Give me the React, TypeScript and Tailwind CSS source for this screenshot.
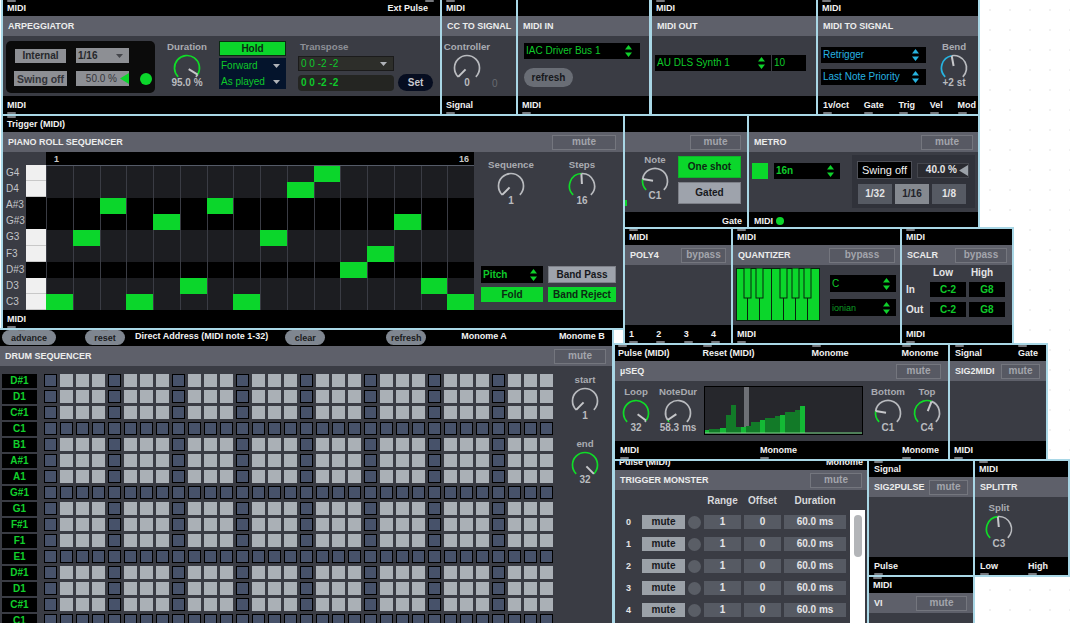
import React from "react";

const GREEN = "#0bd62b";

function Nub({ side, right }: { side: "top" | "bottom"; right?: boolean }) {
  return (
    <i
      className={
        "absolute h-[2px] w-[9px] rounded-[1px] bg-[#77797e] " +
        (side === "top" ? "top-0 " : "bottom-0 ") +
        (right ? "right-[-6px]" : "left-0")
      }
    />
  );
}

function Port({ label, side, right, className }: { label: string; side: "top" | "bottom"; right?: boolean; className?: string }) {
  return (
    <span className={"relative flex items-center " + (className ?? "")}>
      <Nub side={side} right={right} />
      {label}
    </span>
  );
}

function Bar({ h, className, children }: { h: string; className?: string; children?: React.ReactNode }) {
  return <div className={"flex shrink-0 items-stretch justify-between bg-black text-[9px] text-[#f2f2f2] " + h + " " + (className ?? "px-[4px]")}>{children}</div>;
}

function Ghost({ label, className }: { label: string; className: string }) {
  return (
    <div className={"flex items-center justify-center border border-[#74767e] bg-[#575963] text-[#a3a5ac] " + className}>{label}</div>
  );
}

function Module({
  pos,
  title,
  action,
  top,
  bottom,
  topClass,
  bottomClass,
  bodyClass,
  footH = "h-[18px]",
  children,
}: {
  pos: string;
  title: string;
  action?: React.ReactNode;
  top?: React.ReactNode;
  bottom?: React.ReactNode;
  topClass?: string;
  bottomClass?: string;
  bodyClass?: string;
  footH?: string;
  children?: React.ReactNode;
}) {
  return (
    <section className={"absolute flex flex-col overflow-hidden border-2 border-[#a9d7e6] " + pos}>
      <Bar h="h-[16px]" className={topClass}>{top}</Bar>
      <div className="flex h-[20px] shrink-0 items-center justify-between bg-[#5e606a] px-[5px] text-[#eceded]">
        <span className="text-[9px]">{title}</span>
        {action}
      </div>
      <div className={"min-h-0 flex-1 bg-[#3a3c44] " + (bodyClass ?? "")}>{children}</div>
      <Bar h={footH} className={bottomClass}>{bottom}</Bar>
    </section>
  );
}

function Dial({
  label,
  value,
  amount,
  className,
  color = "#10dc28",
}: {
  label: string;
  value: string;
  amount: number;
  className: string;
  color?: string;
}) {
  const r = 12.5;
  const point = (a: number, radius: number) => {
    const t = ((-225 + a * 270) * Math.PI) / 180;
    return [15 + radius * Math.cos(t), 15 + radius * Math.sin(t)];
  };
  const arc = (from: number, to: number) => {
    const [x1, y1] = point(from, r);
    const [x2, y2] = point(to, r);
    const large = (to - from) * 270 > 180 ? 1 : 0;
    return `M${x1} ${y1}A${r} ${r} 0 ${large} 1 ${x2} ${y2}`;
  };
  const [nx, ny] = point(amount, r);
  const [bx, by] = point(amount, 2);
  return (
    <div className={"flex flex-col items-center " + className}>
      <span className="h-[12px] text-[9.7px] leading-[12px] text-[#a9abb1]">{label}</span>
      <svg width="30" height="30" viewBox="0 0 30 30" className="shrink-0">
        {amount < 1 && <path d={arc(amount, 1)} fill="none" stroke="#b9bbbf" strokeWidth="1.7" />}
        {amount > 0 && <path d={arc(0, amount)} fill="none" stroke={color} strokeWidth="1.7" />}
        <path d={`M${bx} ${by}L${nx} ${ny}`} stroke="#c6c7ca" strokeWidth="2" />
      </svg>
      <span className="mt-[-6px] h-[12px] leading-[12px] text-[#b9bbbf]">{value}</span>
    </div>
  );
}

function UpDown({ color = "#0fd02b" }: { color?: string }) {
  return (
    <svg width="7" height="12" viewBox="0 0 7 12" className="shrink-0">
      <path d="M3.5 0L7 4.5H0Z M0 7.5H7L3.5 12Z" fill={color} />
    </svg>
  );
}

function Down({ color = "#b0b3b8" }: { color?: string }) {
  return (
    <svg width="7" height="4" viewBox="0 0 7 4" className="shrink-0">
      <path d="M0 0H7L3.5 4Z" fill={color} />
    </svg>
  );
}

function Drop({ label, className, arrow, textClass }: { label: string; className: string; arrow: React.ReactNode; textClass?: string }) {
  return (
    <div className={"flex items-center justify-between pl-[2px] pr-[6px] font-normal " + className}>
      <span className={textClass ?? "text-[#0fc92a]"}>{label}</span>
      {arrow}
    </div>
  );
}

function Btn({ label, className }: { label: string; className: string }) {
  return <div className={"flex items-center justify-center " + className}>{label}</div>;
}

function Pill({ label, className }: { label: string; className: string }) {
  return (
    <div className={"relative flex h-[15px] items-center justify-center rounded-full bg-[#7f8690] text-[#1b1c20] " + className}>
      <i className="absolute left-[16px] top-[-1px] h-[2px] w-[7px] bg-[#77797e]" />
      {label}
    </div>
  );
}

function Arpeggiator() {
  return (
    <Module
      pos="left-[1px] top-[-2px] h-[118px] w-[441px]"
      title="ARPEGGIATOR"
      topClass="pl-[4px] pr-[12px]"
      top={<><Port label="MIDI" side="top" /><Port label="Ext Pulse" side="top" right /></>}
      bottom={<Port label="MIDI" side="bottom" />}
      bodyClass="flex items-start"
    >
      <div className="ml-[3px] mt-[5px] flex h-[52px] w-[149px] shrink-0 flex-col gap-[8px] rounded-[5px] bg-[#0b0b0b] pl-[8px] pt-[7px]">
        <div className="flex items-center gap-[10px]">
          <Btn label="Internal" className="ml-[1px] h-[14px] w-[51px] bg-[#8d8f94] text-[#26272b]" />
          <Drop label="1/16" className="h-[15px] w-[53px] bg-[#8d8f94] text-[#26272b]" textClass="font-bold text-[#26272b]" arrow={<Down color="#44464b" />} />
        </div>
        <div className="flex items-center gap-[9px]">
          <Btn label="Swing off" className="h-[15px] w-[53px] bg-[#8d8f94] text-[10.5px] text-[#33343a]" />
          <div className="flex h-[15px] w-[53px] items-center justify-end bg-[#8d8f94] text-[#33343a]">
            <span className="mr-[3px] font-normal">50.0 %</span>
            <svg width="9" height="11" viewBox="0 0 9 11"><path d="M0 5.5L9 0V11Z" fill={GREEN} /></svg>
          </div>
          <i className="ml-[2px] h-[12px] w-[12px] rounded-full bg-[#0bd62b]" />
        </div>
      </div>
      <Dial label="Duration" value="95.0 %" amount={0.95} className="ml-[7px] mt-[5px] w-[50px]" />
      <div className="ml-[7px] mt-[5px] flex w-[67px] flex-col">
        <Btn label="Hold" className="h-[15px] border border-[#0a2a12] bg-[#0bd62b] text-[#0b2a12]" />
        <Drop label="Forward" className="mt-[2px] h-[16px] bg-[#04142c]" arrow={<Down />} />
        <Drop label="As played" className="h-[15px] bg-[#04142c]" arrow={<Down />} />
      </div>
      <div className="ml-[12px] mt-[5px] flex w-[136px] flex-col">
        <span className="h-[12px] pl-[2px] text-[9.7px] leading-[12px] text-[#8d8f96]">Transpose</span>
        <Drop label="0 0 -2 -2" className="mt-[3px] h-[15px] w-[96px] border border-[#1b1b1b] bg-[#2d2e2a]" arrow={<Down />} />
        <div className="mt-[3px] flex items-center gap-[4px]">
          <div className="flex h-[16px] w-[96px] items-center rounded-[4px] bg-[#242522] pl-[3px] text-[#0fc92a]">0 0 -2 -2</div>
          <Btn label="Set" className="h-[17px] w-[35px] rounded-full bg-[#060d20] text-[#c6c8cf]" />
        </div>
      </div>
    </Module>
  );
}

const ROWS = [
  { name: "G4", white: true },
  { name: "D4", white: true },
  { name: "A#3", white: false },
  { name: "G#3", white: false },
  { name: "G3", white: true },
  { name: "F3", white: true },
  { name: "D#3", white: false },
  { name: "D3", white: true },
  { name: "C3", white: true },
];
const SEQ = [8, 4, 2, 8, 3, 7, 2, 8, 4, 1, 0, 6, 5, 3, 7, 8];

function PianoRoll() {
  return (
    <Module
      pos="left-[1px] top-[114px] h-[216px] w-[624px]"
      title="PIANO ROLL SEQUENCER"
      action={<Ghost label="mute" className="mr-[2px] h-[15px] w-[64px]" />}
      top={<Port label="Trigger (MIDI)" side="top" />}
      bottom={<Port label="MIDI" side="bottom" />}
      bodyClass="flex"
    >
      <div className="w-[43px] shrink-0 pt-[13px]">
        <div className="grid h-[145px] grid-rows-[repeat(9,1fr)]">
          {ROWS.map((row) => (
            <div key={row.name} className="flex">
              <span className="flex w-[23px] items-center pl-[3px] font-normal text-[#c3c4c8]">{row.name}</span>
              <i className={"w-[20px] border-b border-[#c8c8c8] " + (row.white ? "bg-[#f0f0f0]" : "border-black bg-black")} />
            </div>
          ))}
        </div>
      </div>
      <div className="w-[428px] shrink-0">
        <div className="flex h-[13px] items-center justify-between bg-black pl-[8px] pr-[5px] text-[9px] text-[#c9c9c9]">
          <span>1</span>
          <span>16</span>
        </div>
        <div className="grid h-[145px] grid-cols-[repeat(16,1fr)] grid-rows-[repeat(9,1fr)] border-t border-[#555b68]">
          {ROWS.map((row, r) =>
            SEQ.map((note, c) => (
              <i
                key={`${r}-${c}`}
                className={
                  note === r
                    ? "bg-[#0bd62b]"
                    : "border-l border-[#3a3c44] " + (row.white ? "bg-[#1c1d21]" : "bg-black")
                }
              />
            ))
          )}
        </div>
      </div>
      <div className="flex min-w-0 flex-1 flex-col pl-[2px] pt-[7px]">
        <div className="flex">
          <Dial label="Sequence" value="1" amount={0} className="w-[70px]" />
          <Dial label="Steps" value="16" amount={0.49} className="ml-[1px] w-[70px]" />
        </div>
        <div className="mb-[8px] ml-[5px] mt-auto grid grid-cols-[62px_68px] gap-x-[5px] gap-y-[4px]">
          <Drop label="Pitch" className="h-[17px] bg-black pl-[2px]" textClass="font-bold text-[#0fc92a]" arrow={<UpDown />} />
          <Btn label="Band Pass" className="h-[17px] border border-[#7d8088] bg-[#9ea3ac] text-[#17181c]" />
          <Btn label="Fold" className="h-[15px] bg-[#0bd62b] text-[#0c2a13]" />
          <Btn label="Band Reject" className="h-[15px] bg-[#0bd62b] text-[#0c2a13]" />
        </div>
      </div>
    </Module>
  );
}

function Gate() {
  return (
    <Module
      pos="left-[623px] top-[114px] h-[118px] w-[126px]"
      title=""
      action={<Ghost label="mute" className="mr-[1px] h-[15px] w-[51px]" />}
      topClass="px-[4px]"
      bottomClass="justify-end pr-[5px] pl-0"
      bottom={<Port label="Gate" side="bottom" />}
      bodyClass="flex"
    >
      <i className="mt-[48px] h-[6px] w-[2px] bg-[#0bd62b]" />
      <Dial label="Note" value="C1" amount={0.2} className="ml-[5px] mt-[2px] w-[46px]" />
      <div className="mt-[4px] flex w-[63px] flex-col gap-[4px]">
        <Btn label="One shot" className="h-[22px] border border-[#0fb52b] bg-[#0bd62b] text-[#0c2a13]" />
        <Btn label="Gated" className="h-[22px] border border-[#7d8088] bg-[#9ea3ac] text-[#17181c]" />
      </div>
    </Module>
  );
}

function Metro() {
  return (
    <Module
      pos="left-[747px] top-[114px] h-[118px] w-[233px]"
      title="METRO"
      action={<Ghost label="mute" className="h-[15px] w-[52px]" />}
      bottom={
        <span className="relative flex items-center gap-[3px]">
          <Nub side="bottom" />MIDI<i className="h-[8px] w-[8px] rounded-full bg-[#0bd62b]" />
        </span>
      }
      bottomClass="justify-start px-[5px]"
      bodyClass="flex items-start"
    >
      <i className="ml-[3px] mt-[11px] h-[16px] w-[16px] bg-[#0bd62b]" />
      <Drop label="16n" className="ml-[6px] mt-[11px] h-[16px] w-[66px] bg-black pl-[2px]" arrow={<UpDown />} textClass="font-bold text-[#0fc92a]" />
      <div className="ml-[12px] mt-[3px] flex h-[53px] w-[123px] flex-col gap-[5px] bg-[#30323a] pl-[5px] pt-[6px]">
        <div className="flex items-center gap-[5px]">
          <Btn label="Swing off" className="h-[18px] w-[55px] border border-[#4e5058] bg-black text-[11px] font-normal text-[#f2f2f2]" />
          <div className="flex h-[15px] w-[52px] items-center justify-end border border-[#44464d] bg-[#2a2b31] text-[#e4e4e6]">
            <span className="mr-[2px]">40.0 %</span>
            <svg width="9" height="11" viewBox="0 0 9 11"><path d="M0 5.5L9 0V11Z" fill="#9ba1a8" /></svg>
          </div>
        </div>
        <div className="flex gap-[3px] pl-[1px]">
          <Btn label="1/32" className="h-[20px] w-[34px] bg-[#565a63] text-[#e4e4e6]" />
          <Btn label="1/16" className="h-[20px] w-[34px] bg-[#858990] text-[#22232a]" />
          <Btn label="1/8" className="h-[20px] w-[34px] bg-[#565a63] text-[#e4e4e6]" />
        </div>
      </div>
    </Module>
  );
}

function Keyboard() {
  const blacks = [8, 20, 44, 56, 68];
  return (
    <svg width="84" height="53" viewBox="0 0 84 53" className="shrink-0">
      <rect x="0.5" y="0.5" width="83" height="52" fill="#0bd62b" stroke="#08240e" />
      {[1, 2, 3, 4, 5, 6].map((i) => (
        <path key={i} d={`M${i * 12 - 0.5} 0V53`} stroke="#08240e" />
      ))}
      {blacks.map((x) => (
        <rect key={x} x={x} y="0" width="7" height="30" fill="#0bd62b" stroke="#08240e" />
      ))}
    </svg>
  );
}

function Scalr() {
  const cell = "flex h-[15px] w-[36px] items-center justify-center bg-black text-[#0fc92a]";
  return (
    <Module
      pos="left-[900px] top-[227px] h-[118px] w-[114px]"
      title="SCALR"
      action={<Ghost label="bypass" className="h-[15px] w-[52px]" />}
      top={<Port label="MIDI" side="top" />}
      bottom={<Port label="MIDI" side="bottom" />}
    >
      <div className="grid grid-cols-[21px_36px_36px] items-center gap-x-[3px] pl-[4px] pt-[2px] text-[#e4e4e6]">
        <span />
        <span className="pr-[10px] text-center">Low</span>
        <span className="pr-[10px] text-center">High</span>
        <span className="mt-[3px]">In</span>
        <div className={"mt-[3px] " + cell}>C-2</div>
        <div className={"mt-[3px] " + cell}>G8</div>
        <span className="mt-[5px]">Out</span>
        <div className={"mt-[5px] " + cell}>C-2</div>
        <div className={"mt-[5px] " + cell}>G8</div>
      </div>
    </Module>
  );
}

const BARS = [
  [4, 3, true], [11, 4, false], [6, 5, true], [5, 18, false], [5, 28, false], [5, 6, false], [5, 6, true], [5, 7, false],
  [9, 11, false], [5, 13, true], [10, 15, false], [5, 17, false], [5, 18, true], [10, 21, false], [5, 23, false], [5, 27, true],
] as [number, number, boolean][];

function SeqGraph() {
  let x = 1;
  return (
    <svg width="159" height="49" viewBox="0 0 159 49" className="shrink-0">
      <rect width="159" height="49" fill="#000" />
      <rect x="1" y="1" width="157" height="47" fill="#26272c" />
      <rect x="40" y="1" width="5" height="41" fill="#6e7076" />
      {BARS.map(([w, h, hi], i) => {
        const bar = <rect key={i} x={x} y={47 - h} width={w} height={h} fill={hi ? "#14b935" : "#127a28"} />;
        x += w;
        return bar;
      })}
      <path d="M1 47H158" stroke="#78d987" />
    </svg>
  );
}

function MicroSeq() {
  return (
    <Module
      pos="left-[613px] top-[343px] h-[118px] w-[337px]"
      title="µSEQ"
      action={<Ghost label="mute" className="mr-[2px] h-[15px] w-[45px]" />}
      topClass="justify-start pl-[3px]"
      top={
        <>
          <Port label="Pulse (MIDI)" side="top" />
          <Port label="Reset (MIDI)" side="top" className="ml-[33px]" />
          <Port label="Monome" side="top" className="ml-[57px]" />
          <Port label="Monome" side="top" className="ml-[53px]" />
        </>
      }
      bottomClass="justify-start pl-[5px]"
      bottom={
        <>
          <Port label="MIDI" side="bottom" />
          <Port label="Monome" side="bottom" className="ml-[121px]" />
          <Port label="Monome" side="bottom" className="ml-[105px]" />
        </>
      }
      bodyClass="flex items-start"
    >
      <Dial label="Loop" value="32" amount={0.97} className="mt-[5px] w-[42px]" />
      <Dial label="NoteDur" value="58.3 ms" amount={0.04} className="mt-[5px] w-[42px]" />
      <div className="ml-[5px] mt-[5px]"><SeqGraph /></div>
      <Dial label="Bottom" value="C1" amount={0.2} className="ml-[5px] mt-[5px] w-[40px]" />
      <Dial label="Top" value="C4" amount={0.58} className="mt-[5px] w-[38px]" />
    </Module>
  );
}

function TriggerMonster() {
  return (
    <Module
      pos="left-[613px] top-[452px] h-[260px] w-[256px]"
      title="TRIGGER MONSTER"
      action={<Ghost label="mute" className="h-[15px] w-[52px]" />}
      top={<><Port label="Pulse (MIDI)" side="top" /><Port label="Monome" side="top" /></>}
      bodyClass="flex"
    >
      <div className="w-[233px] shrink-0">
        <div className="flex h-[22px] items-center text-[#d8d9dc]">
          <span className="ml-[89px] w-[37px] text-center">Range</span>
          <span className="ml-[3px] w-[37px] text-center">Offset</span>
          <span className="ml-[3px] w-[62px] text-center">Duration</span>
        </div>
        <div className="mt-[3px] flex flex-col gap-[8px]">
          {[0, 1, 2, 3, 4].map((n) => (
            <div key={n} className="flex h-[14px] items-center text-[#e4e4e6]">
              <span className="w-[27px] text-center text-[9px]">{n}</span>
              <Btn label="mute" className="h-[14px] w-[43px] bg-[#9ba1a8] text-[#17181c]" />
              <i className="ml-[3px] h-[13px] w-[13px] rounded-full bg-[#5a5e66]" />
              <Btn label="1" className="ml-[3px] h-[14px] w-[37px] bg-[#565a63]" />
              <Btn label="0" className="ml-[3px] h-[14px] w-[37px] bg-[#565a63]" />
              <Btn label="60.0 ms" className="ml-[3px] h-[14px] w-[62px] bg-[#565a63]" />
            </div>
          ))}
        </div>
      </div>
      <div className="ml-[2px] mt-[20px] h-full w-[15px] bg-white pl-[4px] pt-[5px]">
        <i className="block h-[42px] w-[8px] rounded-[4px] bg-[#b3b5b8]" />
      </div>
    </Module>
  );
}

const DRUMS = ["D#1", "D1", "C#1", "C1", "B1", "A#1", "A1", "G#1", "G1", "F#1", "F1", "E1", "D#1", "D1", "C#1", "C1"];

function DrumSequencer() {
  return (
    <Module
      pos="left-[-2px] top-[328px] h-[320px] w-[616px]"
      title="DRUM SEQUENCER"
      action={<Ghost label="mute" className="mr-[1px] h-[15px] w-[52px]" />}
      topClass="items-center justify-start pl-[2px]"
      top={
        <>
          <Pill label="advance" className="w-[54px]" />
          <Pill label="reset" className="ml-[29px] w-[40px]" />
          <span className="ml-[10px]">Direct Address (MIDI note 1-32)</span>
          <Pill label="clear" className="ml-[17px] w-[40px]" />
          <Pill label="refresh" className="ml-[61px] w-[40px]" />
          <span className="ml-[35px]">Monome A</span>
          <span className="ml-[52px]">Monome B</span>
        </>
      }
      bodyClass="flex items-start pl-[2px] pt-[8px]"
    >
      <div className="flex w-[35px] shrink-0 flex-col gap-[2px]">
        {DRUMS.map((d, i) => (
          <div key={i} className="flex h-[14px] items-center justify-center bg-black text-[#12d02c]">{d}</div>
        ))}
      </div>
      <div className="ml-[7px] grid shrink-0 grid-cols-[repeat(32,13px)] gap-[3px]">
        {DRUMS.map((_, r) =>
          Array.from({ length: 32 }, (_, c) => (
            <i
              key={`${r}-${c}`}
              className={
                "h-[13px] w-[13px] " +
                (r % 4 === 3 || c % 4 === 0 ? "border border-black bg-[#47526a]" : "bg-[#aab0b6]")
              }
            />
          ))
        )}
      </div>
      <div className="ml-[7px] flex w-[50px] flex-col items-center">
        <Dial label="start" value="1" amount={0} className="w-[50px]" />
        <Dial label="end" value="32" amount={1} className="mt-[16px] w-[50px]" />
      </div>
    </Module>
  );
}

export default function App() {
  return (
    <div className="relative h-[623px] w-full overflow-hidden whitespace-nowrap bg-white bg-[radial-gradient(circle,#f1f1f1_1px,transparent_1px)] bg-[length:20px_20px] font-['Liberation_Sans',Arial,sans-serif] text-[10px] font-bold leading-[12px]">
      <DrumSequencer />
      <Arpeggiator />
      <Module
        pos="left-[440px] top-[-2px] h-[118px] w-[78px]"
        title="CC TO SIGNAL"
        top={<Port label="MIDI" side="top" />}
        bottom={<Port label="Signal" side="bottom" />}
        bodyClass="relative"
      >
        <Dial label="Controller" value="0" amount={0} className="mt-[5px] w-[50px]" />
        <span className="absolute left-[50px] top-[42px] font-normal text-[#686a70]">0</span>
      </Module>
      <Module
        pos="left-[516px] top-[-2px] h-[118px] w-[135px]"
        title="MIDI IN"
        bottom={<Port label="MIDI" side="bottom" />}
        bodyClass="pl-[6px] pt-[7px]"
      >
        <Drop label="IAC Driver Bus 1" className="h-[16px] w-[116px] bg-black pr-[8px]" arrow={<UpDown />} />
        <Btn label="refresh" className="mt-[9px] h-[19px] w-[49px] rounded-full bg-[#696d75] text-[#17181c]" />
      </Module>
      <Module
        pos="left-[650px] top-[-2px] h-[120px] w-[168px]"
        title="MIDI OUT"
        footH="h-[20px]"
        top={<Port label="MIDI" side="top" />}
        bodyClass="flex items-start pl-[3px] pt-[19px]"
      >
        <Drop label="AU DLS Synth 1" className="h-[16px] w-[116px] bg-black pr-[6px]" arrow={<UpDown />} />
        <div className="ml-[1px] flex h-[16px] w-[34px] items-center bg-black pl-[2px] font-normal text-[#0fc92a]">10</div>
      </Module>
      <Module
        pos="left-[816px] top-[-2px] h-[118px] w-[164px]"
        title="MIDI TO SIGNAL"
        top={<Port label="MIDI" side="top" />}
        bottomClass="pl-[5px] pr-[2px]"
        bottom={["1v/oct", "Gate", "Trig", "Vel", "Mod"].map((l) => <Port key={l} label={l} side="bottom" />)}
        bodyClass="flex items-start pl-[3px]"
      >
        <div className="mt-[11px] flex w-[105px] flex-col gap-[6px]">
          <Drop label="Retrigger" className="h-[16px] bg-black pr-[7px]" arrow={<UpDown color="#27b3e0" />} textClass="text-[#27b3e0]" />
          <Drop label="Last Note Priority" className="h-[16px] bg-black pr-[7px]" arrow={<UpDown color="#27b3e0" />} textClass="text-[#27b3e0]" />
        </div>
        <Dial label="Bend" value="+2 st" amount={0.46} color="#27b3e0" className="ml-[6px] mt-[5px] w-[44px]" />
      </Module>
      <Gate />
      <Metro />
      <PianoRoll />
      <Module
        pos="left-[623px] top-[227px] h-[118px] w-[110px]"
        title="POLY4"
        action={<Ghost label="bypass" className="h-[15px] w-[45px]" />}
        top={<Port label="MIDI" side="top" />}
        bottomClass="pl-[4px] pr-[15px]"
        bottom={["1", "2", "3", "4"].map((l) => <Port key={l} label={l} side="bottom" />)}
      />
      <Module
        pos="left-[731px] top-[227px] h-[118px] w-[171px]"
        title="QUANTIZER"
        action={<Ghost label="bypass" className="h-[15px] w-[66px]" />}
        top={<Port label="MIDI" side="top" />}
        bottom={<Port label="MIDI" side="bottom" />}
        bodyClass="flex items-start pl-[3px] pt-[3px]"
      >
        <Keyboard />
        <div className="ml-[10px] mt-[7px] flex w-[66px] flex-col gap-[7px]">
          <Drop label="C" className="h-[17px] bg-black" arrow={<UpDown />} />
          <Drop label="ionian" className="h-[17px] bg-black text-[9px]" arrow={<UpDown />} textClass="text-[#0b9e24]" />
        </div>
      </Module>
      <Scalr />
      <TriggerMonster />
      <MicroSeq />
      <Module
        pos="left-[948px] top-[343px] h-[118px] w-[100px]"
        title="SIG2MIDI"
        action={<Ghost label="mute" className="mr-[1px] h-[15px] w-[39px]" />}
        topClass="px-[5px] pr-[8px]"
        top={<><Port label="Signal" side="top" /><Port label="Gate" side="top" /></>}
        bottom={<Port label="MIDI" side="bottom" />}
      />
      <Module
        pos="left-[867px] top-[459px] h-[118px] w-[108px]"
        title="SIG2PULSE"
        action={<Ghost label="mute" className="h-[15px] w-[39px]" />}
        topClass="px-[5px]"
        top={<Port label="Signal" side="top" />}
        bottomClass="px-[5px]"
        bottom={<Port label="Pulse" side="bottom" />}
      />
      <Module
        pos="left-[973px] top-[459px] h-[118px] w-[97px]"
        title="SPLITTR"
        top={<Port label="MIDI" side="top" />}
        bottomClass="pl-[5px] pr-[20px]"
        bottom={<><Port label="Low" side="bottom" /><Port label="High" side="bottom" /></>}
        bodyClass="pl-[2px] pt-[5px]"
      >
        <Dial label="Split" value="C3" amount={0.48} className="w-[44px]" />
      </Module>
      <Module
        pos="left-[867px] top-[575px] h-[118px] w-[108px]"
        title="VI"
        action={<Ghost label="mute" className="mr-[1px] h-[15px] w-[51px]" />}
        top={<Port label="MIDI" side="top" />}
      />
    </div>
  );
}
